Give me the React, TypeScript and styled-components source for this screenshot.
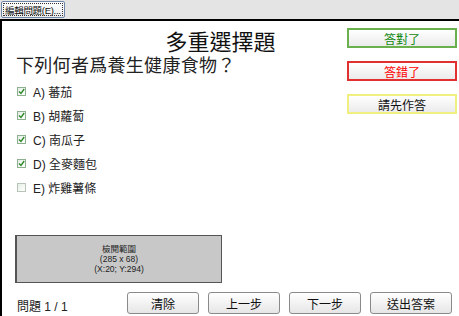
import React from 'react';
import styled, { createGlobalStyle } from 'styled-components';

const GlobalStyle = createGlobalStyle`
  html, body {
    margin: 0;
    padding: 0;
    background: #ffffff;
    overflow: hidden;
  }
  body {
    font-family: "Liberation Sans", "Noto Sans CJK TC", sans-serif;
    color: #111;
  }
`;

const Screen = styled.div`
  width: 459px;
  height: 316px;
  display: flex;
  flex-direction: column;
`;

const Toolbar = styled.div`
  height: 19px;
  background: #e4e4e4;
  display: flex;
  align-items: flex-start;
  padding: 1px 0 0 1px;
  box-sizing: border-box;
`;

const EditButton = styled.div`
  height: 17px;
  box-sizing: border-box;
  display: inline-flex;
  align-items: center;
  justify-content: center;
  padding: 0 3px;
  white-space: nowrap;
  font-size: 9.5px;
  letter-spacing: -0.3px;
  color: #111;
  background: linear-gradient(#ffffff, #ececec);
  border: 1px solid #6f86a8;
  outline: 1px dotted #333;
  outline-offset: -3px;
  border-radius: 2px;
`;

const Panel = styled.div`
  flex: 1;
  display: flex;
  flex-direction: column;
  border-top: 2px solid #000;
  border-left: 2px solid #000;
  background: #fff;
`;

const TopSection = styled.div`
  flex: 1;
  display: flex;
`;

const Content = styled.div`
  flex: 1;
  display: flex;
  flex-direction: column;
`;

const Title = styled.div`
  padding: 10px 0 0 92px;
  text-align: center;
  font-size: 22px;
  line-height: 24px;
  color: #111;
`;

const Question = styled.div`
  padding-left: 14px;
  font-size: 18px;
  line-height: 22px;
  letter-spacing: 0.3px;
  color: #222;
`;

const OptionList = styled.div`
  display: flex;
  flex-direction: column;
  padding: 2px 0 0 15px;
`;

const Option = styled.label`
  height: 24px;
  display: flex;
  align-items: center;
  font-size: 12px;
  color: #222;
`;

const Box = styled.span<{ $checked: boolean }>`
  width: 9px;
  height: 9px;
  box-sizing: border-box;
  border: 1px solid ${p => (p.$checked ? '#8fb08f' : '#b8c4b8')};
  background: linear-gradient(135deg, #e6eee6, #ffffff);
  margin-right: 7px;
  display: flex;
  align-items: center;
  justify-content: center;
`;

const Side = styled.div`
  width: 110px;
  margin-right: 2px;
  padding-top: 7px;
  display: flex;
  flex-direction: column;
  gap: 13px;
`;

const StatusButton = styled.div<{ $border: string; $color: string }>`
  height: 20px;
  box-sizing: border-box;
  border: 2px solid ${p => p.$border};
  background: linear-gradient(#ffffff, #ebebeb);
  color: ${p => p.$color};
  font-size: 12px;
  display: flex;
  align-items: center;
  justify-content: center;
`;

const Preview = styled.div`
  margin-left: 13px;
  width: 207px;
  height: 48px;
  box-sizing: border-box;
  background: #c8c8c8;
  border: 1px solid #555;
  border-left-width: 2px;
  display: flex;
  flex-direction: column;
  align-items: center;
  justify-content: center;
  font-size: 8.5px;
  line-height: 10px;
  color: #222;
`;

const Footer = styled.div`
  height: 22px;
  margin: 9px 0 2px;
  display: flex;
  align-items: center;
  gap: 9px;
`;

const Counter = styled.span`
  width: 116px;
  padding-left: 15px;
  box-sizing: border-box;
  padding-top: 4px;
  font-size: 12px;
  color: #222;
`;

const NavButton = styled.div<{ $wide?: boolean }>`
  width: ${p => (p.$wide ? 82 : 72)}px;
  height: 22px;
  box-sizing: border-box;
  border: 1px solid #8a8a8a;
  border-radius: 3px;
  background: linear-gradient(#ffffff, #e6e6e6);
  font-size: 12px;
  color: #111;
  display: flex;
  align-items: center;
  justify-content: center;
`;

const Check = () => (
  <svg width="7" height="7" viewBox="0 0 7 7">
    <path d="M1 3.5 L3 5.5 L6.2 1" fill="none" stroke="#2f8a2f" strokeWidth="1.4" />
  </svg>
);

const options = [
  { label: 'A) 蕃茄', checked: true },
  { label: 'B) 胡蘿蔔', checked: true },
  { label: 'C) 南瓜子', checked: true },
  { label: 'D) 全麥麵包', checked: true },
  { label: 'E) 炸雞薯條', checked: false },
];

const App = () => {
  return (
    <Screen>
      <GlobalStyle />
      <Toolbar>
        <EditButton>編輯問題(E)...</EditButton>
      </Toolbar>
      <Panel>
        <TopSection>
          <Content>
            <Title>多重選擇題</Title>
            <Question>下列何者爲養生健康食物？</Question>
            <OptionList>
              {options.map(o => (
                <Option key={o.label}>
                  <Box $checked={o.checked}>{o.checked && <Check />}</Box>
                  {o.label}
                </Option>
              ))}
            </OptionList>
          </Content>
          <Side>
            <StatusButton $border="#6ab04c" $color="#118811">答對了</StatusButton>
            <StatusButton $border="#e03030" $color="#ff0000">答錯了</StatusButton>
            <StatusButton $border="#f0f080" $color="#111">請先作答</StatusButton>
          </Side>
        </TopSection>
        <Preview>
          <span>檢閱範圍</span>
          <span>(285 x 68)</span>
          <span>(X:20; Y:294)</span>
        </Preview>
        <Footer>
          <Counter>問題 1 / 1</Counter>
          <NavButton>清除</NavButton>
          <NavButton>上一步</NavButton>
          <NavButton>下一步</NavButton>
          <NavButton $wide>送出答案</NavButton>
        </Footer>
      </Panel>
    </Screen>
  );
};

export default App;
